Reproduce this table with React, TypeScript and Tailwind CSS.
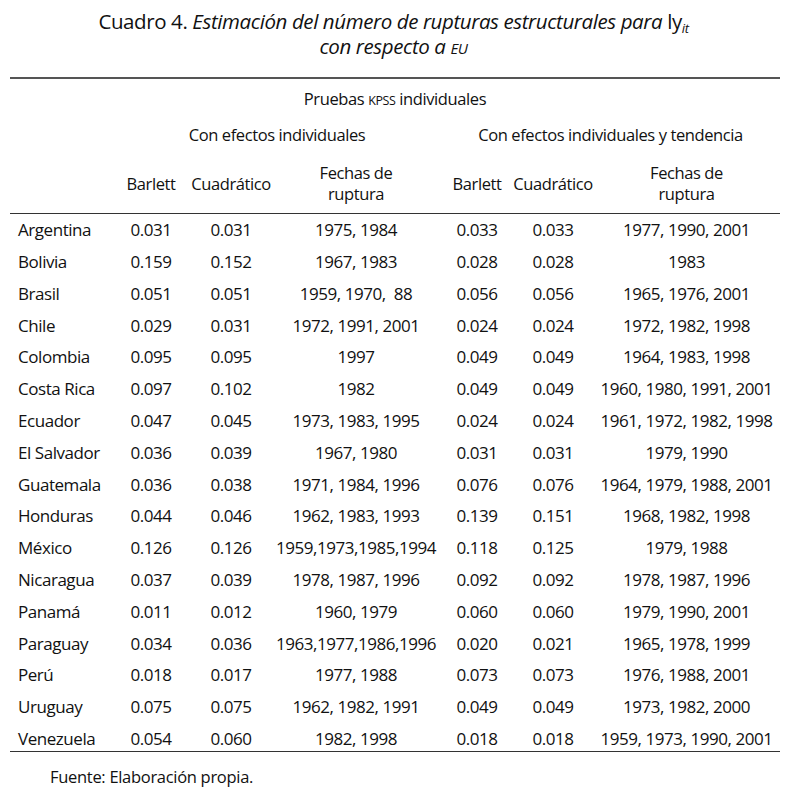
import React from "react";

const rows: [string, string, string, string, string, string, string][] = [
  ["Argentina", "0.031", "0.031", "1975, 1984", "0.033", "0.033", "1977, 1990, 2001"],
  ["Bolivia", "0.159", "0.152", "1967, 1983", "0.028", "0.028", "1983"],
  ["Brasil", "0.051", "0.051", "1959, 1970,  88", "0.056", "0.056", "1965, 1976, 2001"],
  ["Chile", "0.029", "0.031", "1972, 1991, 2001", "0.024", "0.024", "1972, 1982, 1998"],
  ["Colombia", "0.095", "0.095", "1997", "0.049", "0.049", "1964, 1983, 1998"],
  ["Costa Rica", "0.097", "0.102", "1982", "0.049", "0.049", "1960, 1980, 1991, 2001"],
  ["Ecuador", "0.047", "0.045", "1973, 1983, 1995", "0.024", "0.024", "1961, 1972, 1982, 1998"],
  ["El Salvador", "0.036", "0.039", "1967, 1980", "0.031", "0.031", "1979, 1990"],
  ["Guatemala", "0.036", "0.038", "1971, 1984, 1996", "0.076", "0.076", "1964, 1979, 1988, 2001"],
  ["Honduras", "0.044", "0.046", "1962, 1983, 1993", "0.139", "0.151", "1968, 1982, 1998"],
  ["México", "0.126", "0.126", "1959,1973,1985,1994", "0.118", "0.125", "1979, 1988"],
  ["Nicaragua", "0.037", "0.039", "1978, 1987, 1996", "0.092", "0.092", "1978, 1987, 1996"],
  ["Panamá", "0.011", "0.012", "1960, 1979", "0.060", "0.060", "1979, 1990, 2001"],
  ["Paraguay", "0.034", "0.036", "1963,1977,1986,1996", "0.020", "0.021", "1965, 1978, 1999"],
  ["Perú", "0.018", "0.017", "1977, 1988", "0.073", "0.073", "1976, 1988, 2001"],
  ["Uruguay", "0.075", "0.075", "1962, 1982, 1991", "0.049", "0.049", "1973, 1982, 2000"],
  ["Venezuela", "0.054", "0.060", "1982, 1998", "0.018", "0.018", "1959, 1973, 1990, 2001"],
];

const cols = "grid grid-cols-[101px_80px_80px_170px_72px_80px_187px]";

export default function App() {
  return (
    <div
      className="w-[787px] h-[794px] bg-white text-[#111] overflow-hidden font-medium"
      style={{ fontFamily: '"Open Sans", "Noto Sans", sans-serif' }}
    >
      <div className="pt-[9px] text-center text-[20.5px] leading-[25px] tracking-[-0.4px]">
        <div className="h-[25px]">
          Cuadro 4. <i>Estimación del número de rupturas estructurales para </i>
          ly<span className="italic text-[13px] relative top-[4px] leading-none">it</span>
        </div>
        <div className="italic h-[25px]">
          con respecto a <span className="text-[15px] leading-none">EU</span>
        </div>
      </div>

      <div className="mx-[10px] w-[770px] mt-[18px]">
        <div className="h-[2px] bg-[#555]" />
        <div className="h-[38px] text-center leading-[36px] text-[16.5px] tracking-[-0.4px] pt-[2px]">
          Pruebas <span className="text-[12.5px] leading-none">KPSS</span> individuales
        </div>
        <div className={`${cols} h-[35px] items-center text-[16.5px] tracking-[-0.4px] pt-[1px]`}>
          <div />
          <div className="col-span-3 text-center pl-[2px]">Con efectos individuales</div>
          <div className="col-span-3 text-center">Con efectos individuales y tendencia</div>
        </div>
        <div className={`${cols} h-[61px] items-center text-[16.5px] leading-[21px] tracking-[-0.4px] pt-[1px]`}>
          <div />
          <div className="text-center">Barlett</div>
          <div className="text-center">Cuadrático</div>
          <div className="text-center">
            Fechas de
            <br />
            ruptura
          </div>
          <div className="text-center">Barlett</div>
          <div className="text-center">Cuadrático</div>
          <div className="text-center">
            Fechas de
            <br />
            ruptura
          </div>
        </div>
        <div className="h-[1px] bg-[#333]" />
        {rows.map((r) => (
          <div key={r[0]} className={`${cols} h-[31.8px] items-center text-[17px] tracking-[-0.45px]`}>
            <div className="pl-[8px]">{r[0]}</div>
            <div className="text-center">{r[1]}</div>
            <div className="text-center">{r[2]}</div>
            <div className="text-center whitespace-pre">{r[3]}</div>
            <div className="text-center">{r[4]}</div>
            <div className="text-center">{r[5]}</div>
            <div className="text-center">{r[6]}</div>
          </div>
        ))}
        <div className="h-[1px] bg-[#333] -mt-[4px]" />
      </div>
      <div className="pl-[50px] mt-[13px] text-[16.5px] tracking-[-0.3px]">Fuente: Elaboración propia.</div>
    </div>
  );
}
